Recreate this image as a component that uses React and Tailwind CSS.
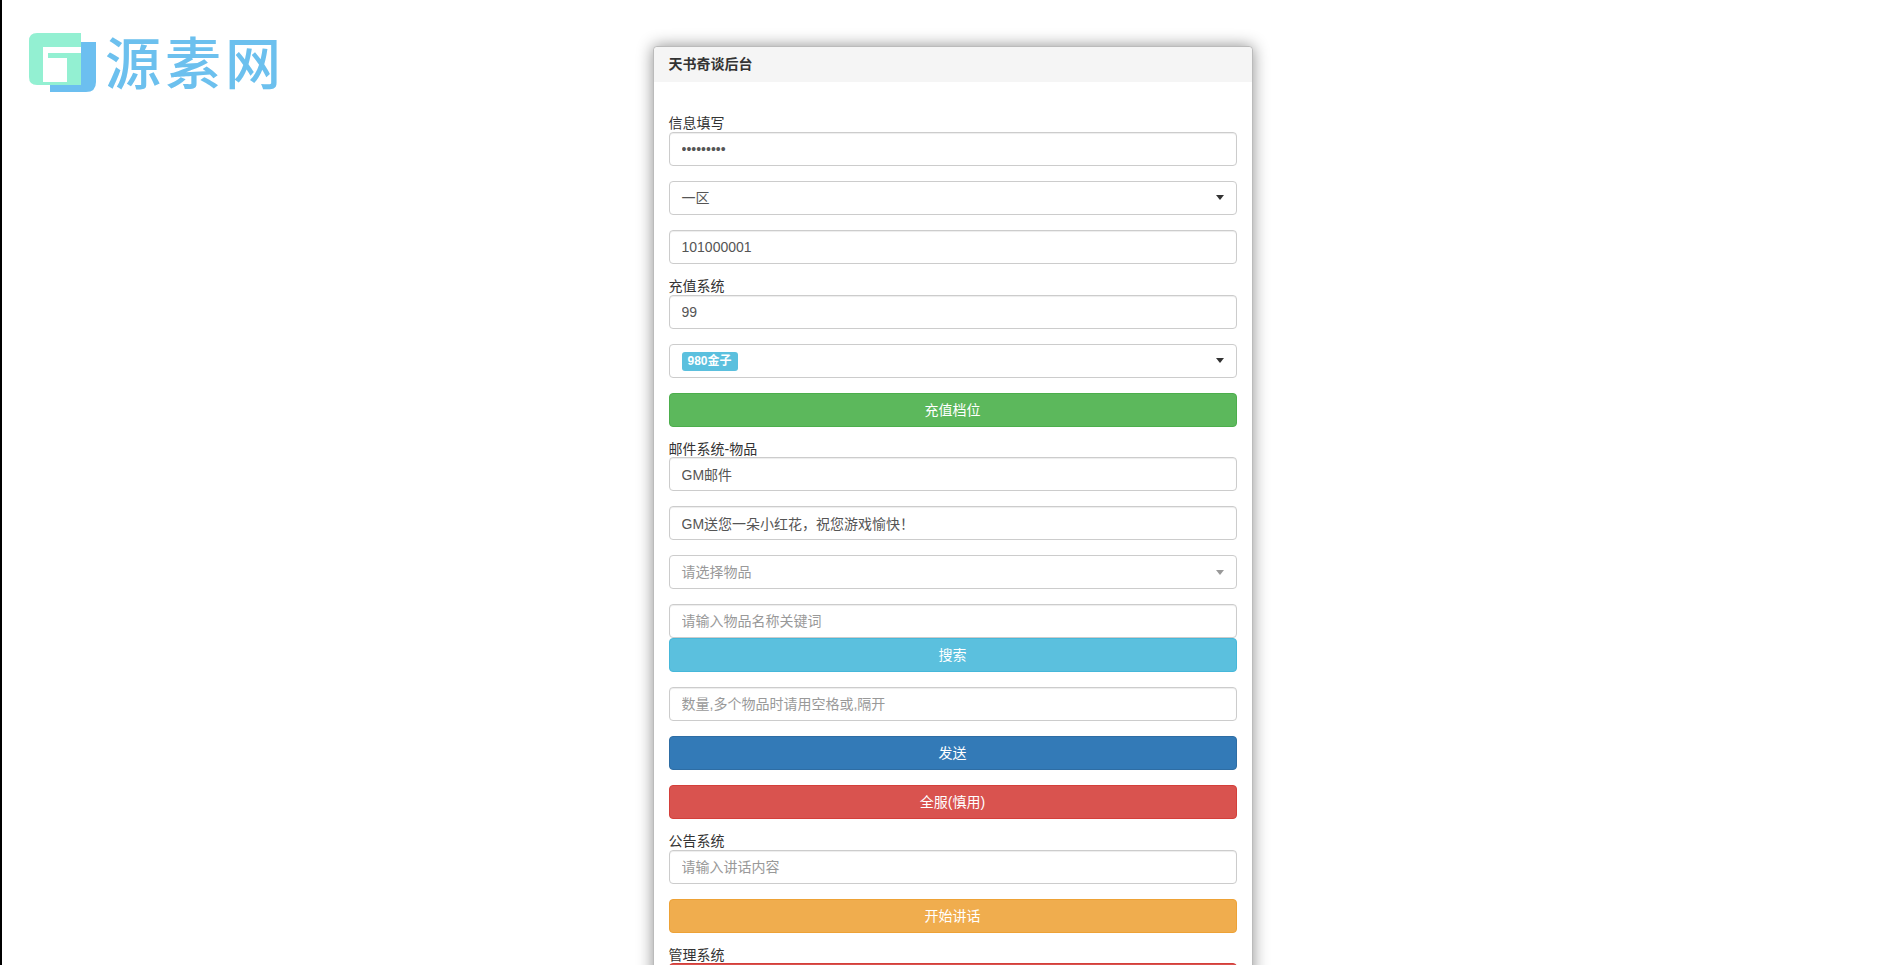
import React from 'react';

const FieldLabel = ({ children }) => (
  <label className="block h-[15.6px] text-sm leading-[15.6px] text-[#333]">{children}</label>
);

const TextInput = ({ type = 'text', value, placeholder, className = 'mb-[15px]' }) => (
  <input
    type={type}
    defaultValue={value}
    placeholder={placeholder}
    className={`block h-[34px] w-full rounded border border-[#ccc] bg-white px-3 py-1.5 text-sm text-[#555] shadow-[inset_0_1px_1px_rgba(0,0,0,0.075)] outline-none placeholder:text-[#999] ${className}`}
  />
);

const SelectBox = ({ children, muted }) => (
  <div className="mb-[15px] flex h-[34px] w-full items-center justify-between rounded border border-[#ccc] bg-white pl-3 pr-3 text-sm text-[#555]">
    <div className="flex items-center">{children}</div>
    <span
      className={`h-0 w-0 border-x-4 border-t-[5px] border-x-transparent ${muted ? 'border-t-[#999]' : 'border-t-[#333]'}`}
    />
  </div>
);

const ActionButton = ({ children, className, spaced = true }) => (
  <button
    type="button"
    className={`block h-[34px] w-full rounded border text-center text-sm text-white ${spaced ? 'mb-[15px]' : ''} ${className}`}
  >
    {children}
  </button>
);

const Logo = () => (
  <div className="absolute left-[29px] top-[24px] flex items-start">
    <svg width="67" height="68" viewBox="29 28 67 68" className="mt-[4px]">
      <path
        d="M81 42 L96 42 L96 82 Q96 92 86 92 L50 92 L50 85 L81 85 Z"
        fill="#6cbff0"
      />
      <path
        d="M37 33 L81 33 L81 47 L43 47 L43 82 L67 82 L67 58 L48 58 L48 53 L81 53 L81 85 L37 85 Q29 85 29 77 L29 41 Q29 33 37 33 Z"
        fill="#93f0d2"
      />
    </svg>
    <span className="ml-[9px] mt-[2px] font-['Noto_Sans_CJK_SC',sans-serif] text-[56px] font-medium leading-[68px] tracking-[4px] text-[#6cc0ee]">
      源素网
    </span>
  </div>
);

export default function App() {
  return (
    <div className="relative flex h-screen overflow-hidden bg-white font-['Liberation_Sans','Noto_Sans_CJK_SC',sans-serif] text-sm text-[#333]">
      <div className="w-[2px] shrink-0 bg-black" />
      <Logo />
      <div className="flex flex-1 justify-center pt-[46px]">
        <div className="h-fit w-[600px] rounded border border-[#bbb] bg-white shadow-[0_0_16px_rgba(0,0,0,0.45)]">
          <div className="h-[35px] rounded-t bg-[#f5f5f5] px-[15px] text-sm font-bold leading-[35px] text-[#333]">
            天书奇谈后台
          </div>
          <div className="px-[15px] pt-[34.4px]">
            <FieldLabel>信息填写</FieldLabel>
            <TextInput type="password" value="123456789" />
            <SelectBox>一区</SelectBox>
            <TextInput value="101000001" />

            <FieldLabel>充值系统</FieldLabel>
            <TextInput value="99" />
            <SelectBox>
              <span className="mt-[1px] h-[19px] rounded-[3px] bg-[#5bc0de] px-[6px] text-xs font-bold leading-[19px] text-white">
                980金子
              </span>
            </SelectBox>
            <ActionButton className="border-[#4cae4c] bg-[#5cb85c]">充值档位</ActionButton>

            <FieldLabel>邮件系统-物品</FieldLabel>
            <TextInput value="GM邮件" />
            <TextInput value="GM送您一朵小红花，祝您游戏愉快！" />
            <SelectBox muted>
              <span className="text-[#999]">请选择物品</span>
            </SelectBox>
            <TextInput placeholder="请输入物品名称关键词" className="" />
            <ActionButton className="border-[#46b8da] bg-[#5bc0de]">搜索</ActionButton>
            <TextInput placeholder="数量,多个物品时请用空格或,隔开" />
            <ActionButton className="border-[#2e6da4] bg-[#337ab7]">发送</ActionButton>
            <ActionButton className="border-[#d43f3a] bg-[#d9534f]">全服(慎用)</ActionButton>

            <FieldLabel>公告系统</FieldLabel>
            <TextInput placeholder="请输入讲话内容" />
            <ActionButton className="border-[#eea236] bg-[#f0ad4e]">开始讲话</ActionButton>

            <FieldLabel>管理系统</FieldLabel>
            <ActionButton className="border-[#d43f3a] bg-[#d9534f]" spaced={false} />
          </div>
        </div>
      </div>
    </div>
  );
}
